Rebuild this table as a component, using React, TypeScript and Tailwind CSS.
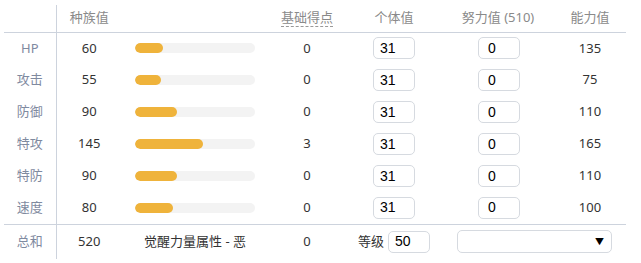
import React from 'react';

type Stat = { label: string; base: number; effort: number; iv: number; ev: number; value: number };

const stats: Stat[] = [
  { label: 'HP', base: 60, effort: 0, iv: 31, ev: 0, value: 135 },
  { label: '攻击', base: 55, effort: 0, iv: 31, ev: 0, value: 75 },
  { label: '防御', base: 90, effort: 0, iv: 31, ev: 0, value: 110 },
  { label: '特攻', base: 145, effort: 3, iv: 31, ev: 0, value: 165 },
  { label: '特防', base: 90, effort: 0, iv: 31, ev: 0, value: 110 },
  { label: '速度', base: 80, effort: 0, iv: 31, ev: 0, value: 100 },
];

const font = { fontFamily: '"Noto Sans", "Noto Sans CJK SC", sans-serif' };

const Box: React.FC<{ value: string; indent?: string }> = ({ value, indent = 'pl-[6px]' }) => (
  <div
    className={`w-[42px] h-[22px] border border-[#d6dae0] rounded-[5px] bg-white flex items-center text-[14px] text-black font-['Liberation_Sans',sans-serif] ${indent}`}
  >
    {value}
  </div>
);

const App: React.FC = () => {
  const total = stats.reduce((s, x) => s + x.base, 0);

  return (
    <div className="w-[641px] h-[263px] bg-white pt-[5px] pl-[4px] text-[13px] text-[#333]" style={font}>
      <table className="border-collapse table-fixed w-[622px]">
        <colgroup>
          <col className="w-[52px]" />
          <col className="w-[66px]" />
          <col className="w-[146px]" />
          <col className="w-[78px]" />
          <col className="w-[96px]" />
          <col className="w-[112px]" />
          <col className="w-[72px]" />
        </colgroup>
        <thead>
          <tr className="h-[27px] border-b border-[#cdd3dd] text-[#8a8a8a]">
            <th className="border-r border-[#cdd3dd] font-normal"></th>
            <th className="font-normal pb-[2px]">种族值</th>
            <th className="font-normal"></th>
            <th className="font-normal pb-[2px]">
              <span className="border-b border-dashed border-[#999] leading-[18px] inline-block">基础得点</span>
            </th>
            <th className="font-normal pb-[2px]">个体值</th>
            <th className="font-normal pb-[2px]">努力值 (510)</th>
            <th className="font-normal pb-[2px]">能力值</th>
          </tr>
        </thead>
        <tbody>
          {stats.map((s, i) => (
            <tr key={s.label} className={`h-[32px] ${i === stats.length - 1 ? 'border-b border-[#cdd3dd]' : ''}`}>
              <td className="border-r border-[#cdd3dd] text-center text-[#7f8aa0]">{s.label}</td>
              <td className="text-center">{s.base}</td>
              <td>
                <div className="ml-[13px] w-[120px] h-[10px] rounded-full bg-[#f3f3f3] overflow-hidden">
                  <div className="h-full rounded-full bg-[#efb33b]" style={{ width: `${(s.base / 255) * 120}px` }} />
                </div>
              </td>
              <td className="text-center">{s.effort}</td>
              <td>
                <div className="flex justify-center">
                  <Box value={String(s.iv)} />
                </div>
              </td>
              <td>
                <div className="flex justify-center pl-[2px]">
                  <Box value={String(s.ev)} indent="pl-[9px]" />
                </div>
              </td>
              <td className="text-center">{s.value}</td>
            </tr>
          ))}
          <tr className="h-[35px]">
            <td className="border-r border-[#cdd3dd] text-center text-[#7f8aa0]">总和</td>
            <td className="text-center">{total}</td>
            <td className="text-center">觉醒力量属性 - 恶</td>
            <td className="text-center">0</td>
            <td>
              <div className="flex justify-center items-center gap-[4px]">
                <span>等级</span>
                <Box value="50" />
              </div>
            </td>
            <td colSpan={2}>
              <div className="ml-[15px] w-[155px] h-[23px] border border-[#d6dae0] rounded-[5px] flex items-center justify-end pr-[7px]">
                <span className="text-[9px] text-black">▼</span>
              </div>
            </td>
          </tr>
        </tbody>
      </table>
    </div>
  );
};

export default App;
